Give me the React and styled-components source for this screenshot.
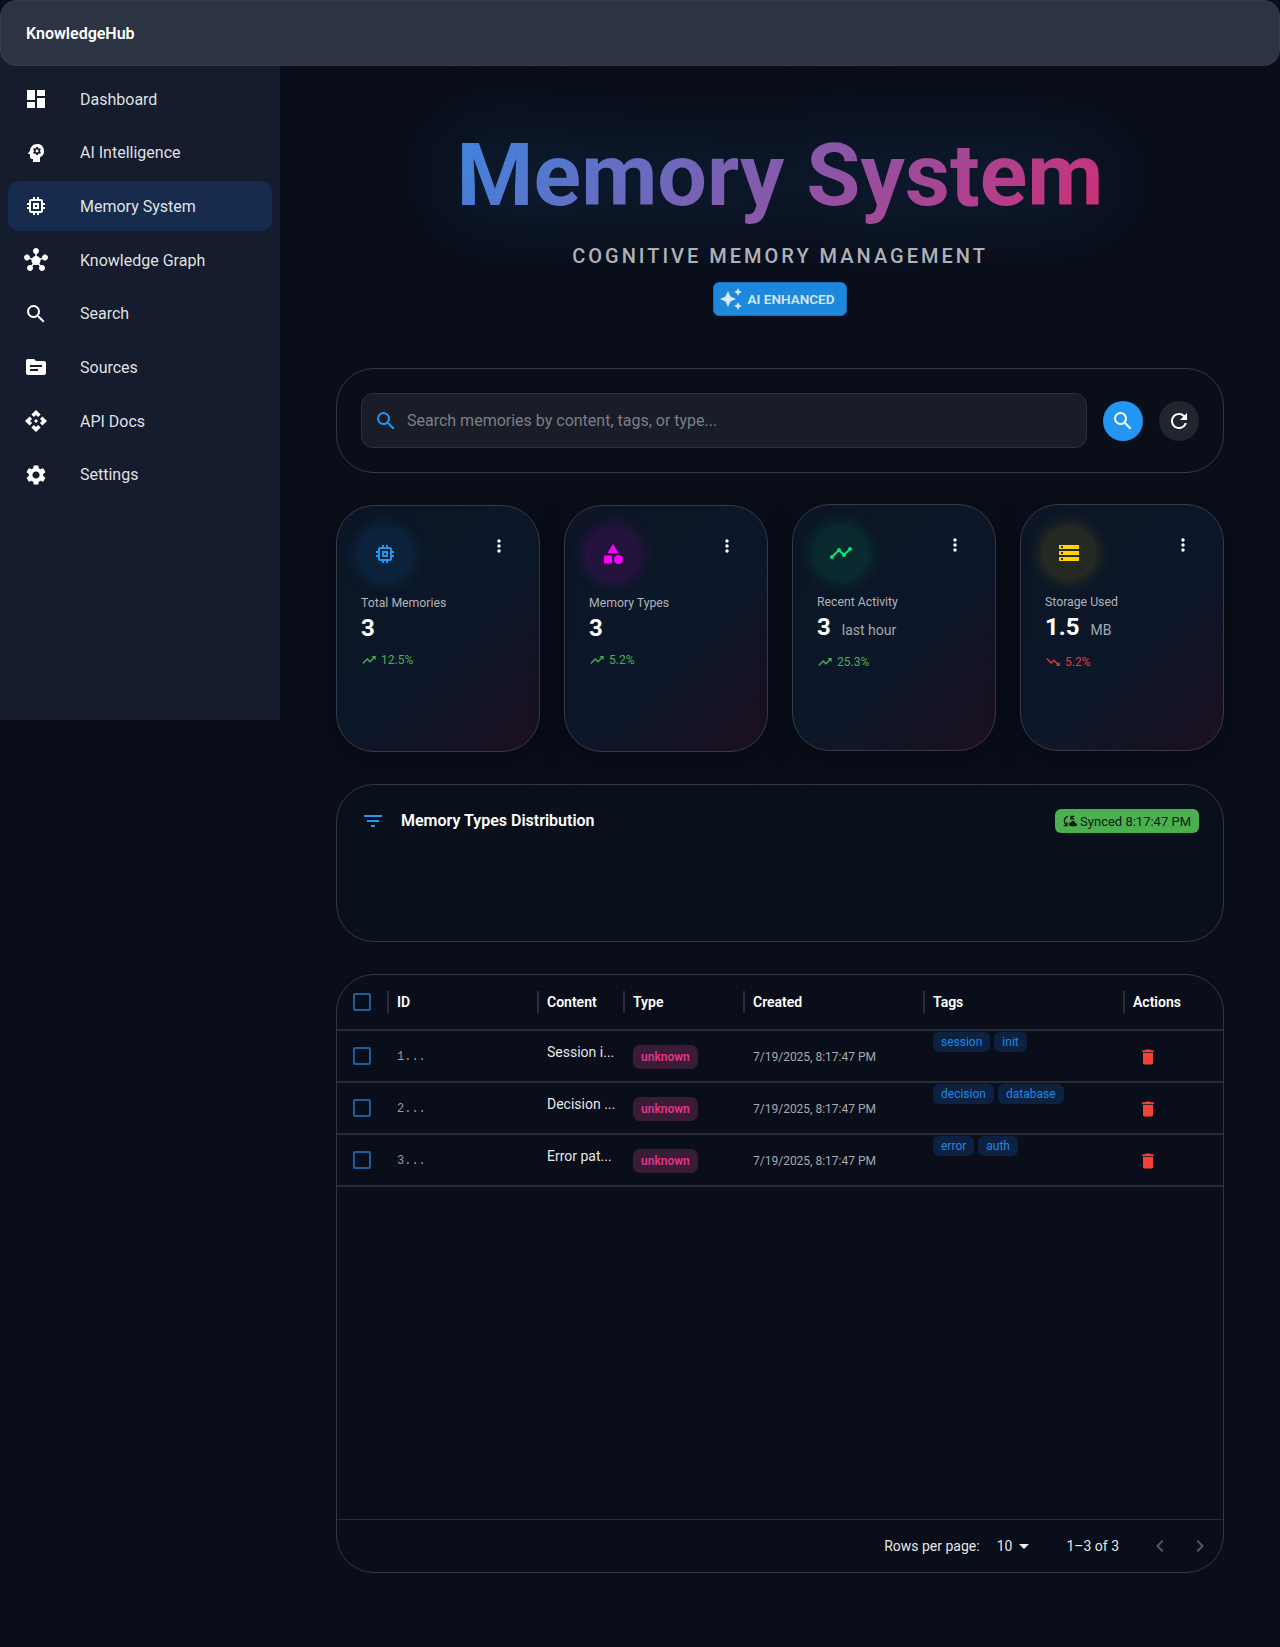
import React from 'react';
import styled, { createGlobalStyle } from 'styled-components';
import {
    MdDashboard, MdPsychology, MdMemory, MdHub, MdSearch, MdSource, MdApi, MdSettings,
    MdAutoAwesome, MdRefresh, MdMoreVert, MdCategory, MdTimeline, MdStorage, MdTrendingUp,
    MdTrendingDown, MdFilterList, MdCloudSync, MdDelete, MdCheckBoxOutlineBlank,
    MdArrowDropDown, MdChevronLeft, MdChevronRight,
} from 'react-icons/md';

const GlobalStyle = createGlobalStyle`
    html, body {
        margin: 0;
        padding: 0;
    }
    body {
        background: #0a0e1a;
        color: #fff;
        font-family: Roboto, "Liberation Sans", sans-serif;
        min-height: 100vh;
    }
    * {
        box-sizing: border-box;
    }
`;

const navItems = [
    { label: 'Dashboard', icon: MdDashboard },
    { label: 'AI Intelligence', icon: MdPsychology },
    { label: 'Memory System', icon: MdMemory, active: true },
    { label: 'Knowledge Graph', icon: MdHub },
    { label: 'Search', icon: MdSearch },
    { label: 'Sources', icon: MdSource },
    { label: 'API Docs', icon: MdApi },
    { label: 'Settings', icon: MdSettings },
];

const stats = [
    { label: 'Total Memories', value: '3', trend: '12.5%', up: true, icon: MdMemory, rgb: '33,150,243', lift: 0 },
    { label: 'Memory Types', value: '3', trend: '5.2%', up: true, icon: MdCategory, rgb: '255,0,255', lift: 0 },
    { label: 'Recent Activity', value: '3', unit: 'last hour', trend: '25.3%', up: true, icon: MdTimeline, rgb: '0,230,118', lift: 1 },
    { label: 'Storage Used', value: '1.5', unit: 'MB', trend: '5.2%', up: false, icon: MdStorage, rgb: '255,214,0', lift: 1 },
];

const rows = [
    { id: '1...', content: 'Session i...', tags: ['session', 'init'] },
    { id: '2...', content: 'Decision ...', tags: ['decision', 'database'] },
    { id: '3...', content: 'Error pat...', tags: ['error', 'auth'] },
];

const columns = ['ID', 'Content', 'Type', 'Created', 'Tags', 'Actions'];

function App() {
    return (
        <>
            <GlobalStyle />
            <Header>KnowledgeHub</Header>
            <Layout>
                <Sidebar>
                    {navItems.map(item => (
                        <NavItem key={item.label} $active={item.active}>
                            <item.icon size={24} />
                            <span>{item.label}</span>
                        </NavItem>
                    ))}
                </Sidebar>
                <Main>
                    <Hero>
                        <Title>Memory System</Title>
                        <Subtitle>COGNITIVE MEMORY MANAGEMENT</Subtitle>
                        <AiBadge><MdAutoAwesome size={24} />AI ENHANCED</AiBadge>
                    </Hero>

                    <SearchCard>
                        <SearchInput>
                            <MdSearch size={24} color="#2196f3" />
                            <span>Search memories by content, tags, or type...</span>
                        </SearchInput>
                        <RoundButton $primary><MdSearch size={24} /></RoundButton>
                        <RoundButton><MdRefresh size={24} /></RoundButton>
                    </SearchCard>

                    <StatGrid>
                        {stats.map(stat => (
                            <StatCard key={stat.label} $lift={stat.lift}>
                                <StatTop>
                                    <IconCircle $rgb={stat.rgb}><stat.icon size={24} /></IconCircle>
                                    <MenuDots><MdMoreVert size={20} /></MenuDots>
                                </StatTop>
                                <StatLabel>{stat.label}</StatLabel>
                                <StatValue>
                                    {stat.value}
                                    {stat.unit && <StatUnit>{stat.unit}</StatUnit>}
                                </StatValue>
                                <Trend $up={stat.up}>
                                    {stat.up ? <MdTrendingUp size={16} /> : <MdTrendingDown size={16} />}
                                    {stat.trend}
                                </Trend>
                            </StatCard>
                        ))}
                    </StatGrid>

                    <ChartCard>
                        <MdFilterList size={24} color="#2196f3" />
                        <ChartTitle>Memory Types Distribution</ChartTitle>
                        <SyncChip><MdCloudSync size={16} />Synced 8:17:47 PM</SyncChip>
                    </ChartCard>

                    <TableCard>
                        <HeadRow>
                            <CheckCell><Check size={24} /></CheckCell>
                            {columns.map(col => <HeadCell key={col}>{col}</HeadCell>)}
                        </HeadRow>
                        <TableBody>
                            {rows.map(row => (
                                <Row key={row.id}>
                                    <CheckCell><Check size={24} /></CheckCell>
                                    <IdCell>{row.id}</IdCell>
                                    <ContentCell>{row.content}</ContentCell>
                                    <Cell><TypeChip>unknown</TypeChip></Cell>
                                    <DateCell>7/19/2025, 8:17:47 PM</DateCell>
                                    <TagsCell>
                                        {row.tags.map(tag => <Tag key={tag}>{tag}</Tag>)}
                                    </TagsCell>
                                    <Cell><TrashButton><MdDelete size={20} /></TrashButton></Cell>
                                </Row>
                            ))}
                        </TableBody>
                        <Footer>
                            <span>Rows per page:</span>
                            <RowsSelect>10<MdArrowDropDown size={24} /></RowsSelect>
                            <PageInfo>1–3 of 3</PageInfo>
                            <PageArrows>
                                <MdChevronLeft size={24} />
                                <MdChevronRight size={24} />
                            </PageArrows>
                        </Footer>
                    </TableCard>
                </Main>
            </Layout>
        </>
    );
}

const Header = styled.header`
    position: relative;
    z-index: 1;
    height: 66px;
    display: flex;
    align-items: center;
    padding: 0 25px;
    font-size: 16px;
    font-weight: 600;
    background: #2c3343;
    border: 1px solid #363c4b;
    border-radius: 16px;
`;

const Layout = styled.div`
    display: flex;
    align-items: flex-start;
`;

const Sidebar = styled.nav`
    flex: 0 0 280px;
    height: 670px;
    margin-top: -16px;
    padding: 24px 8px 0;
    display: flex;
    flex-direction: column;
    gap: 3.7px;
    background: #141c2e;
`;

const NavItem = styled.div`
    height: 50px;
    display: flex;
    align-items: center;
    gap: 32px;
    padding: 0 16px;
    border-radius: 12px;
    font-size: 16px;
    color: rgba(255, 255, 255, 0.88);
    background: ${props => (props.$active ? '#172c4d' : 'transparent')};
    svg {
        color: #fff;
        flex: none;
    }
`;

const Main = styled.main`
    flex: 1;
    min-width: 0;
    padding: 56px 56px 74px;
    display: flex;
    flex-direction: column;
    gap: 32px;
`;

const Hero = styled.section`
    display: flex;
    flex-direction: column;
    align-items: center;
    height: 214px;
    margin-bottom: 0;
`;

const Title = styled.h1`
    align-self: stretch;
    margin: 0;
    text-align: center;
    font-size: 88px;
    line-height: 1.2;
    font-weight: 700;
    background: linear-gradient(135deg, #2196f3, #e91e63);
    -webkit-background-clip: text;
    background-clip: text;
    color: transparent;
    filter: drop-shadow(0 0 40px rgba(33, 150, 243, 0.3));
`;

const Subtitle = styled.div`
    margin-top: 16px;
    font-size: 20px;
    font-weight: 500;
    letter-spacing: 3px;
    color: #b0b3b8;
`;

const AiBadge = styled.div`
    margin-top: 14px;
    height: 34px;
    padding: 0 12px 0 5px;
    display: flex;
    align-items: center;
    gap: 5px;
    border-radius: 6px;
    background: #1e88dd;
    border: 1px solid #1a6fb5;
    font-size: 13.5px;
    font-weight: 600;
    color: rgba(255, 255, 255, 0.82);
`;

const Panel = styled.section`
    border: 1px solid #35383f;
    border-radius: 38px;
    background: rgba(255, 255, 255, 0.005);
`;

const SearchCard = styled(Panel)`
    display: flex;
    align-items: center;
    gap: 16px;
    padding: 24px;
`;

const SearchInput = styled.div`
    flex: 1;
    height: 55px;
    display: flex;
    align-items: center;
    gap: 9px;
    padding: 0 12px;
    border: 1px solid #2c3038;
    border-radius: 12px;
    background: #191d28;
    font-size: 16px;
    color: #7b7e86;
`;

const RoundButton = styled.button`
    width: 40px;
    height: 40px;
    padding: 0;
    border: 0;
    border-radius: 50%;
    display: flex;
    align-items: center;
    justify-content: center;
    color: #fff;
    background: ${props => (props.$primary ? '#2196f3' : '#22252e')};
`;

const StatGrid = styled.div`
    display: grid;
    grid-template-columns: repeat(4, 1fr);
    gap: 24px;
`;

const StatCard = styled.article`
    height: 247px;
    padding: 24px;
    border: 1px solid #383a44;
    border-radius: 38px;
    background: linear-gradient(135deg, rgba(33, 150, 243, 0.05) 0%, rgba(33, 150, 243, 0.07) 55%, rgba(233, 30, 99, 0.08) 100%);
    box-shadow: 0 8px 32px rgba(0, 0, 0, 0.3);
    transform: translateY(${props => -props.$lift}px);
`;

const StatTop = styled.div`
    display: flex;
    justify-content: space-between;
    align-items: flex-start;
`;

const IconCircle = styled.div`
    width: 48px;
    height: 48px;
    border-radius: 50%;
    display: flex;
    align-items: center;
    justify-content: center;
    color: rgb(${props => props.$rgb});
    background: rgba(${props => props.$rgb}, 0.1);
    box-shadow: 0 0 20px rgba(${props => props.$rgb}, 0.3);
`;

const MenuDots = styled.div`
    display: flex;
    margin: 6px 6px 0 0;
    color: #fff;
`;

const StatLabel = styled.div`
    margin-top: 16px;
    font-size: 12.25px;
    line-height: 18px;
    color: #b0b3b8;
`;

const StatValue = styled.div`
    font-size: 24px;
    font-weight: 700;
    line-height: 32px;
`;

const StatUnit = styled.span`
    margin-left: 11px;
    font-size: 14px;
    font-weight: 400;
    color: #a6a9af;
`;

const Trend = styled.div`
    margin-top: 8px;
    display: flex;
    align-items: center;
    gap: 4px;
    font-size: 12px;
    color: ${props => (props.$up ? '#4caf50' : '#e53935')};
`;

const ChartCard = styled(Panel)`
    height: 158px;
    padding: 24px;
    display: flex;
    align-items: flex-start;
    background: #0a0f1c;
`;

const ChartTitle = styled.h2`
    flex: 1;
    margin: 0 0 0 16px;
    font-size: 16px;
    line-height: 24px;
    font-weight: 600;
`;

const SyncChip = styled.div`
    height: 24px;
    padding: 0 8px 0 6px;
    display: flex;
    align-items: center;
    gap: 3px;
    border-radius: 6px;
    background: #4caf50;
    color: rgba(0, 0, 0, 0.87);
    font-size: 13px;
`;

const TableCard = styled(Panel)`
    height: 599px;
    display: flex;
    flex-direction: column;
    overflow: hidden;
`;

const gridColumns = '50px 150px 86px 120px 180px 200px 100px';

const HeadRow = styled.div`
    display: grid;
    grid-template-columns: ${gridColumns};
    height: 56px;
    flex: none;
    border-bottom: 2px solid #2a2d33;
`;

const Row = styled.div`
    display: grid;
    grid-template-columns: ${gridColumns};
    height: 52px;
    border-bottom: 2px solid #2a2d33;
`;

const TableBody = styled.div`
    flex: 1;
`;

const CheckCell = styled.div`
    display: flex;
    align-items: center;
    justify-content: center;
    padding-left: 0;
`;

const Check = styled(MdCheckBoxOutlineBlank)`
    color: #1a5f9f;
`;

const HeadCell = styled.div`
    display: flex;
    align-items: center;
    padding: 0 10px;
    font-size: 14px;
    font-weight: 600;
    position: relative;
    &::before {
        content: '';
        position: absolute;
        left: 0;
        top: 16px;
        bottom: 16px;
        width: 2px;
        background: #2a2d33;
    }
`;

const Cell = styled.div`
    display: flex;
    align-items: center;
    padding: 2px 10px 0;
`;

const IdCell = styled(Cell)`
    font-family: "Liberation Mono", monospace;
    font-size: 12px;
    color: #9a9da3;
`;

const ContentCell = styled(Cell)`
    align-items: flex-start;
    padding: 11px 10px 0;
    font-size: 14px;
    line-height: 20px;
    color: rgba(255, 255, 255, 0.92);
    white-space: nowrap;
`;

const DateCell = styled(Cell)`
    font-size: 12px;
    color: #a6a9af;
`;

const TagsCell = styled(Cell)`
    align-items: flex-start;
    gap: 4px;
    padding: 1px 10px 0;
`;

const TypeChip = styled.span`
    height: 24px;
    padding: 0 8px;
    display: inline-flex;
    align-items: center;
    border-radius: 7px;
    background: #391c36;
    color: #e0358a;
    font-size: 12px;
    font-weight: 600;
`;

const Tag = styled.span`
    height: 20px;
    padding: 0 8px;
    display: inline-flex;
    align-items: center;
    border-radius: 6px;
    background: #0c2240;
    color: #1e88e5;
    font-size: 12px;
`;

const TrashButton = styled.div`
    display: flex;
    margin-left: 5px;
    color: #f44336;
`;

const Footer = styled.footer`
    height: 53px;
    flex: none;
    display: flex;
    align-items: center;
    justify-content: flex-end;
    border-top: 1px solid #2a2d33;
    font-size: 14px;
    color: rgba(255, 255, 255, 0.92);
`;

const RowsSelect = styled.div`
    display: flex;
    align-items: center;
    margin-left: 17px;
`;

const PageInfo = styled.span`
    margin-left: 30px;
`;

const PageArrows = styled.div`
    display: flex;
    gap: 16px;
    margin-left: 29px;
    padding-right: 11px;
    color: #54565c;
`;

export default App;
